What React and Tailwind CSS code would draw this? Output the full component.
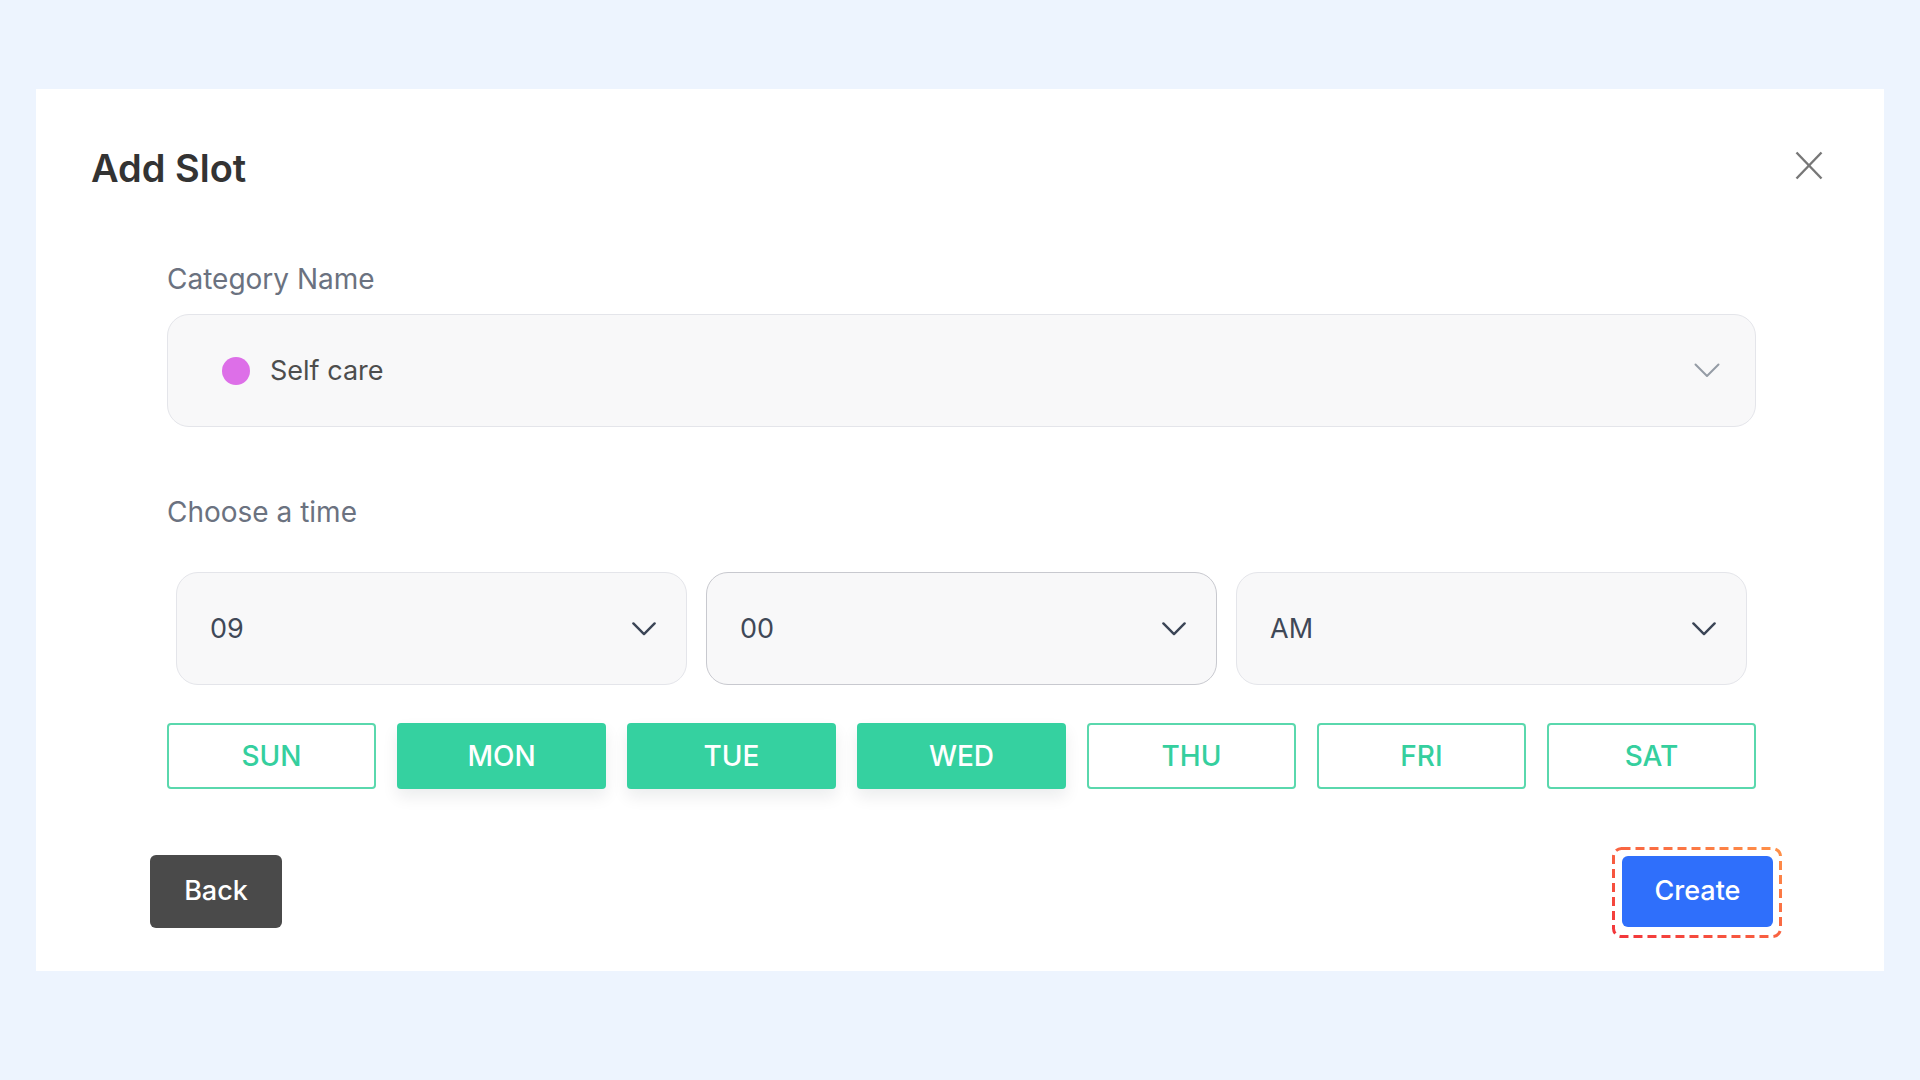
import { useState } from "react";

const DAYS = [
  { key: "sun", label: "SUN", active: false },
  { key: "mon", label: "MON", active: true },
  { key: "tue", label: "TUE", active: true },
  { key: "wed", label: "WED", active: true },
  { key: "thu", label: "THU", active: false },
  { key: "fri", label: "FRI", active: false },
  { key: "sat", label: "SAT", active: false },
];

const ChevronDown = ({ className, color, width = 2 }) => (
  <svg className={className} viewBox="0 0 26 15" fill="none">
    <polyline
      points="1.5,1.5 13,13 24.5,1.5"
      stroke={color}
      strokeWidth={width}
      strokeLinecap="round"
      strokeLinejoin="round"
    />
  </svg>
);

const CloseIcon = () => (
  <svg className="w-[28px] h-[29px]" viewBox="0 0 28 29" fill="none">
    <line x1="1.5" y1="1.5" x2="26.5" y2="27.5" stroke="#777777" strokeWidth="2.4" />
    <line x1="26.5" y1="1.5" x2="1.5" y2="27.5" stroke="#777777" strokeWidth="2.4" />
  </svg>
);

const TimeSelect = ({ value, focused }) => (
  <div
    className={`h-[113px] rounded-[22px] bg-[#f8f8f9] flex items-center justify-between pl-[33px] pr-[30px] ${
      focused ? "border-[1.5px] border-[#c8c9cf]" : "border border-[#e4e5ea]"
    }`}
  >
    <span className="text-[27px] leading-none text-[#3f4857]">{value}</span>
    <ChevronDown className="w-[24px] h-[14px]" color="#3b4556" width={2.6} />
  </div>
);

export default function App() {
  const [days, setDays] = useState(DAYS);

  const toggleDay = (key) => {
    setDays((prev) => prev.map((d) => (d.key === key ? { ...d, active: !d.active } : d)));
  };

  return (
    <div className="min-h-screen w-full bg-[#edf4fe] pt-[89px] pb-[109px] px-[36px] font-['Inter','Roboto',sans-serif]">
      <div className="bg-white h-[882px] pt-[60px] pl-[55px] pr-[61px]">
        {/* header */}
        <div className="flex items-start justify-between">
          <h1 className="text-[38px] leading-none font-semibold text-[#333333]">Add Slot</h1>
          <button className="mt-[2px]">
            <CloseIcon />
          </button>
        </div>

        <div className="ml-[76px] w-[1589px]">
          {/* category */}
          <div className="mt-[78px] text-[28px] leading-none text-[#6b7280]">Category Name</div>
          <div className="mt-[21px] h-[113px] rounded-[22px] border border-[#e4e5ea] bg-[#f8f8f9] flex items-center pl-[54px] pr-[35px]">
            <span className="w-[28px] h-[28px] rounded-full bg-[#dd6fe8]" />
            <span className="ml-[20px] text-[27px] leading-none text-[#4d4d4d]">Self care</span>
            <ChevronDown className="ml-auto w-[26px] h-[15px]" color="#959ca5" width={2} />
          </div>

          {/* time */}
          <div className="mt-[71px] text-[28px] leading-none text-[#6b7280]">Choose a time</div>
          <div className="mt-[46px] grid grid-cols-3 gap-[19px] px-[9px]">
            <TimeSelect value="09" />
            <TimeSelect value="00" focused />
            <TimeSelect value="AM" />
          </div>

          {/* days */}
          <div className="mt-[38px] grid grid-cols-7 gap-[21px]">
            {days.map((d) => (
              <button
                key={d.key}
                onClick={() => toggleDay(d.key)}
                className={`h-[66px] rounded-[4px] text-[28px] font-medium leading-none ${
                  d.active
                    ? "bg-[#35d1a0] text-white shadow-[0_8px_16px_rgba(15,23,42,0.08)]"
                    : "bg-white border-2 border-[#5ad8ad] text-[#35cf9e]"
                }`}
              >
                {d.label}
              </button>
            ))}
          </div>

          {/* footer */}
          <div className="mt-[66px] -mx-[17px] flex items-start justify-between">
            <button className="w-[132px] h-[73px] rounded-[6px] bg-[#4a4a4a] text-white text-[27px] font-medium">
              Back
            </button>
            <div className="relative mt-[1px]">
              <button className="w-[151px] h-[71px] rounded-[6px] bg-[#2f6ffb] text-white text-[27px] font-medium">
                Create
              </button>
              <svg
                className="absolute left-[-10px] top-[-9px] w-[170px] h-[91px] pointer-events-none"
                viewBox="0 0 170 91"
                fill="none"
              >
                <defs>
                  <linearGradient id="outline" x1="0" y1="1" x2="1" y2="0">
                    <stop offset="0%" stopColor="#f2343a" />
                    <stop offset="100%" stopColor="#ff9148" />
                  </linearGradient>
                </defs>
                <rect
                  x="1.5"
                  y="1.5"
                  width="167"
                  height="88"
                  rx="8"
                  stroke="url(#outline)"
                  strokeWidth="3"
                  strokeDasharray="9 5"
                />
              </svg>
            </div>
          </div>
        </div>
      </div>
    </div>
  );
}
